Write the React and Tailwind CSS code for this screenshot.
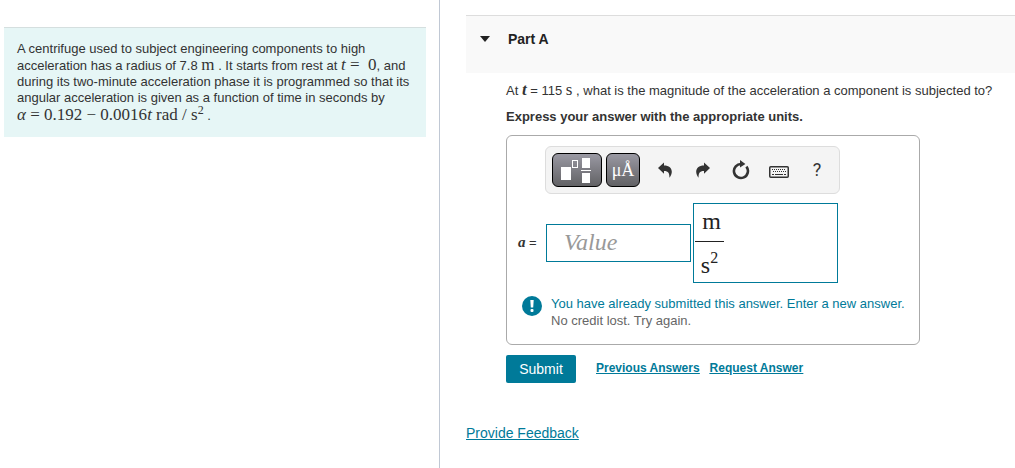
import { useState } from "react";

function MathText({ children }) {
  return (
    <span className="font-['Liberation_Serif',serif] text-[17px] leading-4">{children}</span>
  );
}

function ToolButton({ label, children }) {
  return (
    <button type="button" aria-label={label} className="flex h-9 w-[38px] shrink-0 items-center justify-center text-[#333333]">
      {children}
    </button>
  );
}

function DarkButton({ label, className, children }) {
  return (
    <button
      type="button"
      aria-label={label}
      className={`flex h-[34px] shrink-0 items-center justify-center rounded-md border border-black bg-linear-to-b from-[#9a99a3] to-[#626265] text-white ${className}`}
    >
      {children}
    </button>
  );
}

function UndoIcon({ className }) {
  return (
    <svg width="14" height="16" viewBox="0 0 14 16" fill="currentColor" className={className}>
      <path d="M0 6 L6 0.5 L6 3.4 C11 3.4 14 6 13.8 10 C13.7 12.2 12.8 14 11.4 15.8 C11.6 11.6 10.5 9 6 9 L6 11.8 Z" />
    </svg>
  );
}

function Toolbar() {
  return (
    <div className="flex h-12 w-[295px] items-center rounded-md border border-[#dddddd] bg-[#f4f4f4] pl-1.5">
      <DarkButton label="Templates" className="w-[50px]">
        <svg width="32" height="26" viewBox="0 0 32 26" fill="none">
          <rect x="0" y="10" width="10" height="13" fill="white" />
          <rect x="11.5" y="3.5" width="5" height="7" stroke="white" />
          <rect x="21" y="1" width="8" height="10" fill="white" />
          <rect x="20" y="13" width="10" height="1" fill="white" />
          <rect x="21" y="16" width="8" height="10" fill="white" />
        </svg>
      </DarkButton>
      <DarkButton label="Units" className="ml-1 w-[34px]">
        <span className="font-['Liberation_Serif',serif] text-lg">μÅ</span>
      </DarkButton>
      <div className="ml-1.5 flex">
        <ToolButton label="Undo">
          <UndoIcon />
        </ToolButton>
        <ToolButton label="Redo">
          <UndoIcon className="-scale-x-100" />
        </ToolButton>
        <ToolButton label="Reset">
          <svg width="18" height="20" viewBox="0 0 18 20" fill="none">
            <path d="M9.5 4 A7 7 0 1 0 14.4 6.6" stroke="currentColor" strokeWidth="2.6" />
            <path d="M8 0 L13.4 4 L8 7.6 Z" fill="currentColor" />
          </svg>
        </ToolButton>
        <ToolButton label="Keyboard shortcuts">
          <svg width="20" height="12" viewBox="0 0 20 12" fill="none" className="mt-1">
            <rect x="0.75" y="0.75" width="18.5" height="10.5" rx="1" stroke="currentColor" strokeWidth="1.5" />
            <path d="M3 3.5 H17 M4 5.5 H17" stroke="currentColor" strokeWidth="1" strokeDasharray="1 1" />
            <path d="M3 8.5 H5 M6 8.5 H14 M15 8.5 H17" stroke="currentColor" />
          </svg>
        </ToolButton>
        <ToolButton label="Help">
          <span className="font-[Roboto,sans-serif] text-lg">?</span>
        </ToolButton>
      </div>
    </div>
  );
}

function ProblemStatement() {
  return (
    <aside className="w-[440px] shrink-0 border-r border-[#c0c8d4] pt-[27px] pr-[13px] pl-1">
      <div className="border-t border-[#d5dfdf] bg-[#e6f6f6] px-[13px] pt-[13px] pb-[11px] text-[13px] leading-4 text-[#333333]">
        <p>
          A centrifuge used to subject engineering components to high
          <br />
          acceleration has a radius of 7.8 <MathText>m</MathText> . It starts from rest at{" "}
          <MathText>
            <i>t</i> =&nbsp; 0
          </MathText>
          , and
          <br />
          during its two-minute acceleration phase it is programmed so that its
          <br />
          angular acceleration is given as a function of time in seconds by
        </p>
        <p className="leading-5">
          <MathText>
            <i>α</i> = 0.192 − 0.0016<i>t</i> rad / s<sup className="text-xs leading-none">2</sup>
          </MathText>{" "}
          .
        </p>
      </div>
    </aside>
  );
}

function AnswerBox() {
  const [value, setValue] = useState("");

  return (
    <div className="mt-2 max-w-[414px] rounded-md border border-[#aaaaaa] pt-2.5 pb-[15px]">
      <div className="pl-[38px]">
        <Toolbar />
      </div>

      <div className="mt-[9px] flex items-center">
        <label htmlFor="answer" className="w-[39px] pl-[11px] text-[13px]">
          <i className="font-['Liberation_Serif',serif] text-[15px] font-bold">a</i> =
        </label>
        <input
          id="answer"
          type="text"
          placeholder="Value"
          value={value}
          onChange={(e) => setValue(e.target.value)}
          className="h-[38px] w-[145px] border border-[#007a99] px-[17px] font-['Liberation_Serif',serif] text-2xl placeholder:text-[#999999] placeholder:italic"
        />
        {/* units field */}
        <div
          role="textbox"
          aria-label="Units"
          tabIndex={0}
          className="ml-0.5 flex h-20 w-[145px] items-start border border-[#007a99] pl-px font-['Liberation_Serif',serif] text-2xl text-[#222222]"
        >
          <div className="flex w-[29px] flex-col text-center">
            <span className="border-b border-[#222222] pb-[3px] pl-1 leading-[34px]">m</span>
            <span className="pt-1.5 leading-[35px]">
              s<sup className="-top-2.5 text-base leading-none">2</sup>
            </span>
          </div>
        </div>
      </div>

      <div className="mt-3 flex gap-[9px] pl-[15px] text-[13px] leading-[17px]">
        <svg width="20" height="20" viewBox="0 0 20 20" className="mt-px shrink-0">
          <circle cx="10" cy="10" r="10" fill="#007a99" />
          <path d="M8.3 4 H11.7 L11.2 11.5 H8.8 Z" fill="white" />
          <rect x="8.5" y="13" width="3" height="3" rx="1" fill="white" />
        </svg>
        <div>
          <p className="text-[#007a99]">You have already submitted this answer. Enter a new answer.</p>
          <p className="text-[#666666]">No credit lost. Try again.</p>
        </div>
      </div>
    </div>
  );
}

export default function App() {
  return (
    <div className="flex min-h-screen bg-white font-['Liberation_Sans',Arial,sans-serif] text-[#333333]">
      <ProblemStatement />

      <main className="min-w-0 flex-1 pt-[15px] pl-[26px]">
        <header className="h-[58px] border-t border-[#dddddd] bg-[#f9f9f9] pt-[13px] pl-3.5">
          <button type="button" className="flex items-center text-sm leading-5 font-bold text-[#222222]">
            <svg width="10" height="6" viewBox="0 0 10 6" fill="currentColor" className="mr-[18px]">
              <path d="M0 0 H10 L5 6 Z" />
            </svg>
            Part A
          </button>
        </header>

        <section className="pt-[7px] pl-10 text-[13px]">
          <p className="leading-5">
            At{" "}
            <i className="font-['Liberation_Serif',serif] text-[17px] font-bold">t</i> = 115{" "}
            <span className="font-['Liberation_Serif',serif] text-[17px]">s</span> , what is the magnitude of the
            acceleration a component is subjected to?
          </p>
          <p className="mt-1.5 font-bold">Express your answer with the appropriate units.</p>

          <AnswerBox />

          <div className="mt-2.5 flex items-center">
            <button type="button" className="h-7 w-[70px] rounded-xs bg-[#007a99] text-sm text-white">
              Submit
            </button>
            <div className="ml-5 flex gap-2.5 pb-0.5 text-xs font-bold text-[#007a99] underline">
              <a href="#previous">Previous Answers</a>
              <a href="#request">Request Answer</a>
            </div>
          </div>
        </section>

        <a href="#feedback" className="mt-10 inline-block text-sm text-[#007a99] underline">
          Provide Feedback
        </a>
      </main>
    </div>
  );
}
